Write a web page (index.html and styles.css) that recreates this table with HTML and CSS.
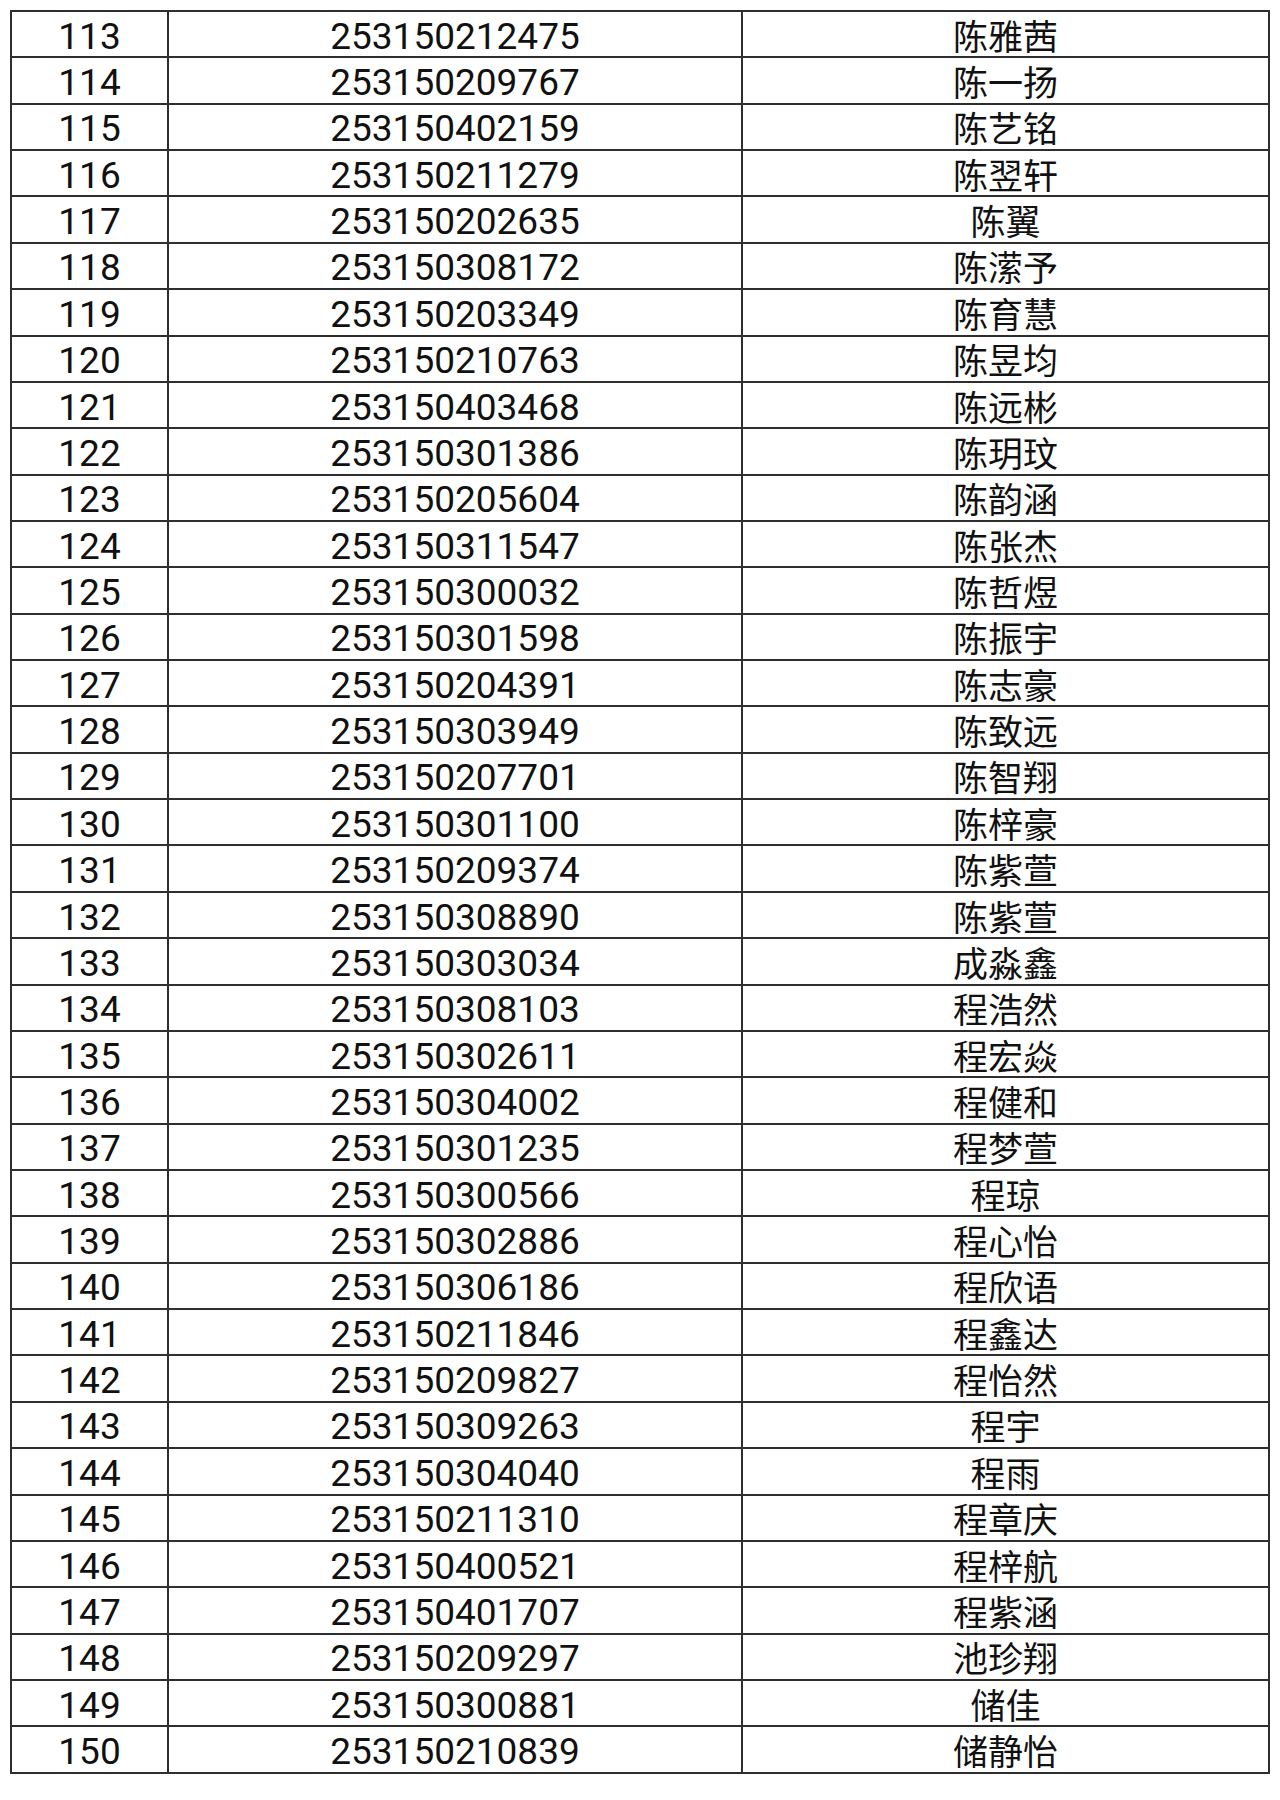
FILE: index.html
```html
<!DOCTYPE html>
<html lang="zh-CN">
<head>
<meta charset="utf-8">
<title>名单</title>
<link rel="stylesheet" href="styles.css">
</head>
<body>
<table class="roster">
<colgroup><col class="c-no"><col class="c-id"><col class="c-name"></colgroup>
<tbody>
<tr><td>113</td><td>253150212475</td><td class="nm">陈雅茜</td></tr>
<tr><td>114</td><td>253150209767</td><td class="nm">陈一扬</td></tr>
<tr><td>115</td><td>253150402159</td><td class="nm">陈艺铭</td></tr>
<tr><td>116</td><td>253150211279</td><td class="nm">陈翌轩</td></tr>
<tr><td>117</td><td>253150202635</td><td class="nm">陈翼</td></tr>
<tr><td>118</td><td>253150308172</td><td class="nm">陈潆予</td></tr>
<tr><td>119</td><td>253150203349</td><td class="nm">陈育慧</td></tr>
<tr><td>120</td><td>253150210763</td><td class="nm">陈昱均</td></tr>
<tr><td>121</td><td>253150403468</td><td class="nm">陈远彬</td></tr>
<tr><td>122</td><td>253150301386</td><td class="nm">陈玥玟</td></tr>
<tr><td>123</td><td>253150205604</td><td class="nm">陈韵涵</td></tr>
<tr><td>124</td><td>253150311547</td><td class="nm">陈张杰</td></tr>
<tr><td>125</td><td>253150300032</td><td class="nm">陈哲煜</td></tr>
<tr><td>126</td><td>253150301598</td><td class="nm">陈振宇</td></tr>
<tr><td>127</td><td>253150204391</td><td class="nm">陈志豪</td></tr>
<tr><td>128</td><td>253150303949</td><td class="nm">陈致远</td></tr>
<tr><td>129</td><td>253150207701</td><td class="nm">陈智翔</td></tr>
<tr><td>130</td><td>253150301100</td><td class="nm">陈梓豪</td></tr>
<tr><td>131</td><td>253150209374</td><td class="nm">陈紫萱</td></tr>
<tr><td>132</td><td>253150308890</td><td class="nm">陈紫萱</td></tr>
<tr><td>133</td><td>253150303034</td><td class="nm">成淼鑫</td></tr>
<tr><td>134</td><td>253150308103</td><td class="nm">程浩然</td></tr>
<tr><td>135</td><td>253150302611</td><td class="nm">程宏焱</td></tr>
<tr><td>136</td><td>253150304002</td><td class="nm">程健和</td></tr>
<tr><td>137</td><td>253150301235</td><td class="nm">程梦萱</td></tr>
<tr><td>138</td><td>253150300566</td><td class="nm">程琼</td></tr>
<tr><td>139</td><td>253150302886</td><td class="nm">程心怡</td></tr>
<tr><td>140</td><td>253150306186</td><td class="nm">程欣语</td></tr>
<tr><td>141</td><td>253150211846</td><td class="nm">程鑫达</td></tr>
<tr><td>142</td><td>253150209827</td><td class="nm">程怡然</td></tr>
<tr><td>143</td><td>253150309263</td><td class="nm">程宇</td></tr>
<tr><td>144</td><td>253150304040</td><td class="nm">程雨</td></tr>
<tr><td>145</td><td>253150211310</td><td class="nm">程章庆</td></tr>
<tr><td>146</td><td>253150400521</td><td class="nm">程梓航</td></tr>
<tr><td>147</td><td>253150401707</td><td class="nm">程紫涵</td></tr>
<tr><td>148</td><td>253150209297</td><td class="nm">池珍翔</td></tr>
<tr><td>149</td><td>253150300881</td><td class="nm">储佳</td></tr>
<tr><td>150</td><td>253150210839</td><td class="nm">储静怡</td></tr>
</tbody>
</table>
</body>
</html>
```
FILE: styles.css
```css
html, body {
  margin: 0;
  padding: 0;
  background: #ffffff;
}
body {
  padding: 10px 0 0 10px;
}
.roster {
  border-collapse: collapse;
  table-layout: fixed;
  width: 1258px;
  height: 1764px;
  color: #111111;
  font-family: Roboto, "Noto Sans CJK SC", sans-serif;
  font-size: 37px;
}
.c-no { width: 157px; }
.c-id { width: 574px; }
.c-name { width: 527px; }
.roster td {
  border: 2px solid #2e2e2e;
  padding: 5px 0 0 0;
  line-height: 36px;
  text-align: center;
  vertical-align: middle;
  white-space: nowrap;
}
.roster td.nm {
  font-family: "Noto Sans CJK SC", sans-serif;
  font-size: 35px;
  padding-top: 1px;
}
```
